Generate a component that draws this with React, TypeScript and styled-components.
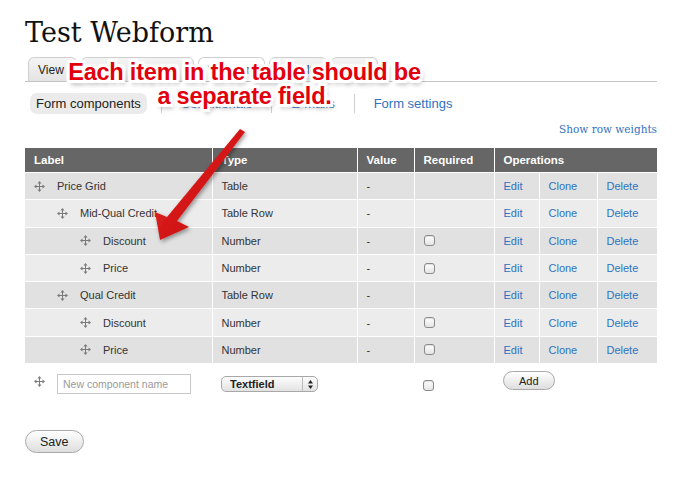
import { FC } from 'react'
import styled, { createGlobalStyle } from 'styled-components'

const GlobalStyle = createGlobalStyle`
  html, body {
    margin: 0;
    padding: 0;
    background: #fff;
  }
  body {
    font-family: "Liberation Sans", Arial, sans-serif;
    color: #333;
  }
`

type RowT = {
  label: string
  level: number
  type: string
  required: boolean
}

const rows: RowT[] = [
  { label: 'Price Grid', level: 0, type: 'Table', required: false },
  { label: 'Mid-Qual Credit', level: 1, type: 'Table Row', required: false },
  { label: 'Discount', level: 2, type: 'Number', required: true },
  { label: 'Price', level: 2, type: 'Number', required: true },
  { label: 'Qual Credit', level: 1, type: 'Table Row', required: false },
  { label: 'Discount', level: 2, type: 'Number', required: true },
  { label: 'Price', level: 2, type: 'Number', required: true },
]

const Page = styled.div`
  position: relative;
  width: 700px;
  height: 478px;
  box-sizing: border-box;
  padding: 16px 43px 0 25px;
`

const Title = styled.h1`
  margin: 0;
  font-family: "DejaVu Serif", Georgia, serif;
  font-weight: 400;
  font-size: 27px;
  line-height: 33px;
  color: #111;
`

const Tabs = styled.ul`
  display: flex;
  margin: 8px 0 0;
  padding: 0 0 0 3px;
  list-style: none;
  border-bottom: 1px solid #c4c4c4;
  height: 24px;
`

const Tab = styled.li<{ $active?: boolean; $width?: number }>`
  display: flex;
  align-items: center;
  height: 24px;
  box-sizing: border-box;
  width: ${p => (p.$width ? `${p.$width}px` : 'auto')};
  padding: 0 12px 0 9px;
  margin-right: 4px;
  border: 1px solid #cfcfcf;
  border-bottom: none;
  border-radius: 6px 6px 0 0;
  background: ${p => (p.$active ? '#fff' : 'linear-gradient(#f4f4f4, #e4e4e4)')};
  font-size: 12px;
  color: #222;
`

const SubTabs = styled.div`
  display: flex;
  align-items: center;
  margin-top: 10px;
  height: 22px;
`

const SubActive = styled.span`
  display: flex;
  align-items: center;
  height: 21px;
  padding: 0 6px;
  margin: 0 14px 0 5px;
  border-radius: 7px;
  background: #ebebeb;
  font-size: 13px;
  color: #222;
`

const SubLink = styled.a`
  display: flex;
  align-items: center;
  height: 19px;
  padding: 0 19px;
  border-left: 1px solid #cfcfcf;
  font-size: 13px;
  color: #2f72bf;
  text-decoration: none;
`

const WeightsRow = styled.div`
  margin-top: 7px;
  text-align: right;
  font-family: "DejaVu Serif", Georgia, serif;
  font-size: 10.5px;
  line-height: 16px;
`

const BlueLink = styled.a`
  color: #2f72bf;
  text-decoration: none;
`

const Table = styled.table`
  margin-top: 11px;
  width: 632px;
  border-collapse: collapse;
  table-layout: fixed;
  font-size: 11px;
`

const Th = styled.th`
  height: 24px;
  padding: 0 0 0 9px;
  background: #666;
  color: #fff;
  font-weight: 700;
  font-size: 11.5px;
  text-align: left;
  border-left: 1px solid #fff;
  &:first-child {
    border-left: none;
  }
`

const Tr = styled.tr<{ $odd: boolean }>`
  background: ${p => (p.$odd ? '#e1e1e1' : '#ececec')};
  border-top: 1px solid #fff;
`

const Td = styled.td`
  height: 26.3px;
  padding: 0 0 0 9px;
  border-left: 1px solid #fff;
  color: #333;
  white-space: nowrap;
  &:first-child {
    border-left: none;
  }
`

const LabelCell = styled.div<{ $level: number; $top?: boolean }>`
  display: flex;
  align-items: ${p => (p.$top ? 'flex-start' : 'center')};
  gap: 12px;
  padding-left: ${p => p.$level * 23}px;
  svg {
    margin-top: ${p => (p.$top ? '2px' : '0')};
  }
`

const NewTr = styled.tr`
  background: #fff;
`

const NewTd = styled.td`
  padding: 11px 0 0 9px;
  vertical-align: top;
  height: 30px;
`

const LinkCell = styled(Td)`
  a {
    color: #2f72bf;
    text-decoration: none;
  }
`

const CheckBox = styled.span<{ $offset?: number }>`
  display: block;
  width: 9px;
  height: 9px;
  margin-top: ${p => p.$offset ?? 0}px;
  border: 1px solid #8a8a8a;
  border-radius: 3px;
  background: linear-gradient(#fff, #e4e4e4);
  box-shadow: inset 0 1px 1px rgba(0, 0, 0, 0.12);
`

const TextInput = styled.input`
  width: 134px;
  height: 20px;
  box-sizing: border-box;
  margin: 0;
  padding: 0 5px;
  border: 1px solid #c8c8c8;
  font-family: "Liberation Sans", Arial, sans-serif;
  font-size: 10.5px;
  &::placeholder {
    color: #9a9a9a;
  }
`

const SelectBox = styled.div`
  display: flex;
  align-items: center;
  justify-content: space-between;
  width: 97px;
  height: 16px;
  box-sizing: border-box;
  margin-top: 2px;
  padding-left: 8px;
  border: 1px solid #a8a8a8;
  border-radius: 5px;
  background: linear-gradient(#fdfdfd, #e2e2e2);
  font-size: 11px;
  font-weight: 700;
  color: #222;
`

const SelectArrows = styled.span`
  display: flex;
  align-items: center;
  justify-content: center;
  width: 14px;
  height: 100%;
  border-left: 1px solid #bbb;
`

const RoundButton = styled.button<{ $small?: boolean }>`
  height: ${p => (p.$small ? 19 : 23)}px;
  padding: 0 ${p => (p.$small ? 15 : 14)}px;
  border: 1px solid #a9a9a9;
  border-radius: 12px;
  background: linear-gradient(#ffffff, #dedede);
  font-family: "Liberation Sans", Arial, sans-serif;
  font-size: ${p => (p.$small ? 11 : 12.5)}px;
  color: #222;
`

const AddButton = styled(RoundButton)`
  margin-top: -3px;
`

const SaveWrap = styled.div`
  margin-top: 26px;
`

const Callout = styled.div`
  position: absolute;
  left: 47px;
  top: 60px;
  width: 395px;
  text-align: center;
  font-family: "Liberation Sans", Arial, sans-serif;
  font-weight: 700;
  font-size: 23.5px;
  line-height: 24px;
  letter-spacing: -0.2px;
  color: #e2000d;
  text-shadow:
    1px 0 0 #fff, -1px 0 0 #fff, 0 1px 0 #fff, 0 -1px 0 #fff,
    2px 0 0 #fff, -2px 0 0 #fff, 0 2px 0 #fff, 0 -2px 0 #fff,
    2px 2px 0 #fff, -2px -2px 0 #fff, 2px -2px 0 #fff, -2px 2px 0 #fff,
    3px 0 1px #fff, -3px 0 1px #fff, 0 3px 1px #fff, 0 -3px 1px #fff,
    3px 3px 1px #fff, -3px -3px 1px #fff, 3px -3px 1px #fff, -3px 3px 1px #fff,
    2px 4px 5px rgba(0, 0, 0, 0.45);
`

const ArrowSvg = styled.svg`
  position: absolute;
  left: 0;
  top: 0;
  pointer-events: none;
`

const DragHandle: FC = () => (
  <svg width="11" height="11" viewBox="0 0 11 11" fill="#7a7a7a">
    <rect x="5" y="2" width="1" height="7" />
    <rect x="2" y="5" width="7" height="1" />
    <path d="M5.5 0 L7.5 2.5 L3.5 2.5 Z" />
    <path d="M5.5 11 L7.5 8.5 L3.5 8.5 Z" />
    <path d="M0 5.5 L2.5 3.5 L2.5 7.5 Z" />
    <path d="M11 5.5 L8.5 3.5 L8.5 7.5 Z" />
  </svg>
)

const App: FC = () => {
  return (
    <>
      <GlobalStyle />
      <Page>
        <Title>Test Webform</Title>
        <Tabs>
          <Tab>View</Tab>
          <Tab $width={113}>Edit</Tab>
          <Tab $active $width={67}>Webform</Tab>
          <Tab $width={58}>Results</Tab>
          <Tab $width={47}>Devel</Tab>
        </Tabs>
        <SubTabs>
          <SubActive>Form components</SubActive>
          <SubLink href="#">Conditionals</SubLink>
          <SubLink href="#">E-mails</SubLink>
          <SubLink href="#">Form settings</SubLink>
        </SubTabs>
        <WeightsRow>
          <BlueLink href="#">Show row weights</BlueLink>
        </WeightsRow>
        <Table>
          <colgroup>
            <col style={{ width: 187 }} />
            <col style={{ width: 145 }} />
            <col style={{ width: 57 }} />
            <col style={{ width: 80 }} />
            <col style={{ width: 45 }} />
            <col style={{ width: 58 }} />
            <col style={{ width: 60 }} />
          </colgroup>
          <thead>
            <tr>
              <Th>Label</Th>
              <Th>Type</Th>
              <Th>Value</Th>
              <Th>Required</Th>
              <Th colSpan={3}>Operations</Th>
            </tr>
          </thead>
          <tbody>
            {rows.map((row, index) => (
              <Tr key={index} $odd={index % 2 === 0}>
                <Td>
                  <LabelCell $level={row.level}>
                    <DragHandle />
                    <span>{row.label}</span>
                  </LabelCell>
                </Td>
                <Td>{row.type}</Td>
                <Td>-</Td>
                <Td>{row.required && <CheckBox />}</Td>
                <LinkCell><a href="#">Edit</a></LinkCell>
                <LinkCell><a href="#">Clone</a></LinkCell>
                <LinkCell><a href="#">Delete</a></LinkCell>
              </Tr>
            ))}
            <NewTr>
              <NewTd>
                <LabelCell $level={0} $top>
                  <DragHandle />
                  <TextInput placeholder="New component name" />
                </LabelCell>
              </NewTd>
              <NewTd>
                <SelectBox>
                  Textfield
                  <SelectArrows>
                    <svg width="5" height="9" viewBox="0 0 5 9" fill="#222">
                      <path d="M2.5 0 L5 3.5 L0 3.5 Z" />
                      <path d="M2.5 9 L5 5.5 L0 5.5 Z" />
                    </svg>
                  </SelectArrows>
                </SelectBox>
              </NewTd>
              <NewTd />
              <NewTd>
                <CheckBox $offset={6} />
              </NewTd>
              <NewTd colSpan={3}>
                <AddButton $small>Add</AddButton>
              </NewTd>
            </NewTr>
          </tbody>
        </Table>
        <SaveWrap>
          <RoundButton>Save</RoundButton>
        </SaveWrap>
        <Callout>
          Each item in the table should be
          <br />
          a separate field.
        </Callout>
        <ArrowSvg width="700" height="478" viewBox="0 0 700 478">
          <defs>
            <linearGradient id="arrowRed" x1="0" y1="0" x2="1" y2="1">
              <stop offset="0" stopColor="#f03030" />
              <stop offset="1" stopColor="#b80000" />
            </linearGradient>
            <filter id="arrowShadow" x="-20%" y="-20%" width="140%" height="140%">
              <feDropShadow dx="1.5" dy="2" stdDeviation="2" floodColor="#000" floodOpacity="0.4" />
            </filter>
          </defs>
          <path
            d="M240 129 L245 132 L177 221 L189 227 L160 240 L155 212 L167 217 Z"
            fill="url(#arrowRed)"
            filter="url(#arrowShadow)"
          />
        </ArrowSvg>
      </Page>
    </>
  )
}

export default App
